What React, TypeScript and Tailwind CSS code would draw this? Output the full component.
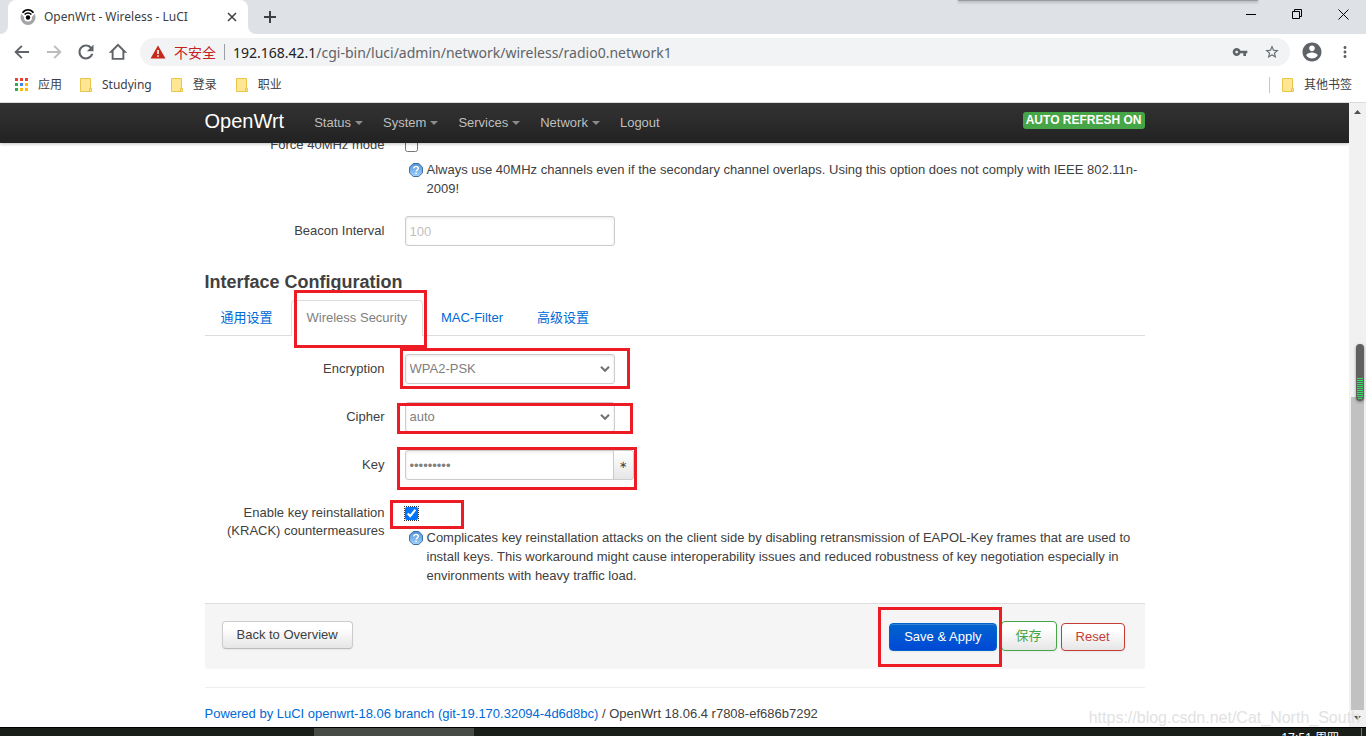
import React, { useState } from "react";

const UI_FONT = "font-['Noto_Sans','Noto_Sans_CJK_SC',sans-serif]";

function Favicon() {
  return (
    <svg width="16" height="16" viewBox="0 0 16 16" className="shrink-0">
      <circle cx="8" cy="8.500" r="7.500" fill="#a2a4a8" />
      <path d="M1.500 5L4 1.200H12L14.500 5L12.500 7.500H3.500Z" fill="#fff" />
      <circle cx="8" cy="8.500" r="4" fill="#fff" />
      <path d="M2.600 3.800C5.500 -.2 10.500 -.2 13.400 3.800" fill="none" stroke="#000" strokeWidth="1.600" />
      <path d="M4.600 5.400C6.500 3.400 9.500 3.400 11.400 5.400" fill="none" stroke="#000" strokeWidth="1.500" />
      <circle cx="8" cy="8.500" r="2.200" fill="#000" />
    </svg>
  );
}

function Material({ d, size = 20, color = "#5f6368" }: { d: string; size?: number; color?: string }) {
  return (
    <svg width={size} height={size} viewBox="0 0 24 24" fill={color} className="shrink-0">
      <path d={d} />
    </svg>
  );
}

const PATHS = {
  back: "M20.500 10.800H7.200l5.400-5.400L11 3.800 2.800 12l8.200 8.200 1.600-1.600-5.400-5.400H20.500z",
  forward: "M3.500 10.800H16.800l-5.400-5.400L13 3.800 21.200 12 13 20.200l-1.600-1.600 5.400-5.400H3.500z",
  reload:
    "M18.400 5.600C16.800 4 14.500 3 12 3c-5 0-9 4-9 9s4 9 9 9c4.200 0 7.700-2.900 8.700-6.800h-2.600c-.9 2.500-3.300 4.300-6.100 4.300-3.600 0-6.500-2.900-6.500-6.500S8.400 5.500 12 5.500c1.800 0 3.400.7 4.600 1.900L13 11h8V3z",
  home: "M12 1.800L.9 12.800h3.500v8.600h15.200v-8.600h3.500L12 1.800zm5.300 17.300H6.700v-8.600L12 5.200l5.300 5.300V19.100z",
  key: "M12.650 10C11.830 7.670 9.610 6 7 6c-3.310 0-6 2.690-6 6s2.690 6 6 6c2.610 0 4.830-1.670 5.650-4H17v4h4v-4h2v-4H12.650zM7 14c-1.100 0-2-.9-2-2s.9-2 2-2 2 .9 2 2-.9 2-2 2z",
  star: "M22 9.240l-7.190-.62L12 2 9.190 8.630 2 9.240l5.460 4.730L5.820 21 12 17.270 18.180 21l-1.630-7.030L22 9.240zM12 15.400l-3.760 2.270 1-4.280-3.320-2.880 4.380-.38L12 6.100l1.710 4.040 4.380.38-3.320 2.880 1 4.280L12 15.400z",
  user: "M12 2.500C6.750 2.500 2.500 6.750 2.500 12s4.250 9.500 9.500 9.500 9.500-4.250 9.500-9.500S17.250 2.500 12 2.500zm0 3c1.600 0 2.850 1.250 2.850 2.850S13.600 11.200 12 11.200s-2.850-1.250-2.850-2.850S10.400 5.500 12 5.500zm0 13.100c-2.380 0-4.470-1.220-5.700-3.060.03-1.890 3.800-2.930 5.700-2.930 1.890 0 5.670 1.040 5.700 2.930-1.230 1.840-3.320 3.060-5.700 3.060z",
  dots: "M12 8c1.100 0 2-.9 2-2s-.9-2-2-2-2 .9-2 2 .9 2 2 2zm0 2c-1.100 0-2 .9-2 2s.9 2 2 2 2-.9 2-2-.9-2-2-2zm0 6c-1.100 0-2 .9-2 2s.9 2 2 2 2-.9 2-2-.9-2-2-2z",
};

function TabStrip() {
  return (
    <div className="relative flex h-[34px] shrink-0 items-stretch bg-[#dee1e6]">
      <span className="h-2 w-2 self-end bg-white">
        <span className="block h-2 w-2 rounded-br-lg bg-[#dee1e6]" />
      </span>
      <div className="flex w-60 items-center rounded-t-lg bg-white pl-3 pr-2 text-[12px] text-[#3c4043]">
        <Favicon />
        <span className="ml-2 flex-1 whitespace-nowrap">OpenWrt - Wireless - LuCI</span>
        <button aria-label="Close tab" className="flex h-4 w-4 items-center justify-center">
          <svg width="10" height="10" viewBox="0 0 10 10" stroke="#3c4043" strokeWidth="1.500">
            <path d="M1 1L9 9M9 1L1 9" />
          </svg>
        </button>
      </div>
      <span className="h-2 w-2 self-end bg-white">
        <span className="block h-2 w-2 rounded-bl-lg bg-[#dee1e6]" />
      </span>
      <button aria-label="New tab" className="flex w-7 items-center justify-center">
        <svg width="12" height="12" viewBox="0 0 12 12" stroke="#3c4043" strokeWidth="2">
          <path d="M6 0V12M0 6H12" />
        </svg>
      </button>
      <div className="ml-auto flex h-7">
        <button aria-label="Minimize" className="flex w-[46px] items-center justify-center">
          <svg width="10" height="10" viewBox="0 0 10 10" stroke="#000">
            <path d="M0 5.500H10" />
          </svg>
        </button>
        <button aria-label="Restore" className="flex w-[46px] items-center justify-center">
          <svg width="10" height="10" viewBox="0 0 10 10" stroke="#000" fill="none">
            <path d="M.5 2.500H7.500V9.500H.5ZM2.500 2.500V.5H9.500V7.500H7.500" />
          </svg>
        </button>
        <button aria-label="Close" className="flex w-[46px] items-center justify-center">
          <svg width="11" height="11" viewBox="0 0 11 11" stroke="#000">
            <path d="M.5 .5L10.500 10.500M10.500 .5L.5 10.500" />
          </svg>
        </button>
      </div>
      <span className="absolute right-[108px] top-0 h-px w-[300px] bg-[#9a9ca0] shadow-[0_1px_3px_#77797c]" />
    </div>
  );
}

function Toolbar() {
  return (
    <div className="flex h-9 shrink-0 items-center pl-3 pr-3">
      <div className="flex gap-3">
        <button aria-label="Back"><Material d={PATHS.back} /></button>
        <button aria-label="Forward"><Material d={PATHS.forward} color="#babcbe" /></button>
        <button aria-label="Reload"><Material d={PATHS.reload} /></button>
        <button aria-label="Home"><Material d={PATHS.home} /></button>
      </div>
      <div className="ml-3 flex h-7 flex-1 items-center rounded-full bg-[#f1f3f4] pl-2.5 pr-2.5 text-[14px]">
        <svg width="16" height="16" viewBox="0 0 16 16" className="shrink-0">
          <path d="M8 1.500L15.500 14.500H.5Z" fill="#c5291c" />
          <path d="M7.200 6H8.800V10H7.200ZM7.200 11.200H8.800V12.800H7.200Z" fill="#fff" />
        </svg>
        <span className="ml-2 whitespace-nowrap text-[#c5221f]">不安全</span>
        <span className="ml-2 h-4 w-px bg-[#9aa0a6]" />
        <div role="textbox" aria-label="Address" className="ml-2 flex-1 whitespace-nowrap text-[#202124]">
          192.168.42.1<span className="text-[#5f6368]">/cgi-bin/luci/admin/network/wireless/radio0.network1</span>
        </div>
        <button aria-label="Passwords"><Material d={PATHS.key} size={16} /></button>
        <button aria-label="Bookmark" className="ml-4"><Material d={PATHS.star} size={16} /></button>
      </div>
      <button aria-label="Profile" className="ml-2.5"><Material d={PATHS.user} size={24} /></button>
      <button aria-label="Menu" className="ml-3"><Material d={PATHS.dots} size={18} /></button>
    </div>
  );
}

function Folder({ label }: { label: string }) {
  return (
    <a href="#" className="flex items-center gap-2.5 whitespace-nowrap">
      <svg width="12" height="14" viewBox="0 0 12 14" className="shrink-0">
        <path d="M.5 .5H10.500V10L11.500 10.500V13.500H.5Z" fill="#ffe693" stroke="#e8c64c" />
        <path d="M9.500 13V10.500H11" fill="none" stroke="#e8c64c" />
      </svg>
      {label}
    </a>
  );
}

function Bookmarks() {
  const colors = ["#ea4335", "#ea4335", "#ea4335", "#34a853", "#4285f4", "#fbbc04", "#34a853", "#fbbc04", "#fbbc04"];
  return (
    <div className="flex h-[33px] shrink-0 items-center border-b border-[#dadce0] pb-[3px] pl-[15px] pr-3.5 text-[12px] text-[#3c4043]">
      <a href="#" className="flex items-center gap-2.5">
        <svg width="13" height="13" viewBox="0 0 13 13">
          {colors.map((c, i) => (
            <rect key={i} x={(i % 3) * 5} y={Math.floor(i / 3) * 5} width="3" height="3" fill={c} />
          ))}
        </svg>
        应用
      </a>
      <div className="ml-[18px] flex gap-[19px]">
        <Folder label="Studying" />
        <Folder label="登录" />
        <Folder label="职业" />
      </div>
      <span className="ml-auto mr-3 h-4 w-px bg-[#c4c7cb]" />
      <Folder label="其他书签" />
    </div>
  );
}

function NavBar() {
  return (
    <header className="relative z-10 h-10 bg-linear-to-b from-[#333] to-[#222] shadow-[0_1px_3px_rgba(0,0,0,0.25)]">
      <div className="mx-auto flex h-10 w-full max-w-[940px] items-start">
        <a href="#" className="pt-2 text-[20px] leading-5 text-white">OpenWrt</a>
        <nav className="ml-5 flex">
          {["Status", "System", "Services", "Network"].map((name) => (
            <a key={name} href="#" className="flex items-center px-2.5 pt-2.5 leading-[19px] text-[#bfbfbf]">
              {name}
              <span className="ml-1 border-x-4 border-t-4 border-x-transparent border-t-[#8c8c8c]" />
            </a>
          ))}
          <a href="#" className="px-2.5 pt-2.5 leading-[19px] text-[#bfbfbf]">Logout</a>
        </nav>
        <span className="ml-auto mt-[9px] h-[17px] rounded-[3px] bg-[#46a546] px-[3px] text-[12px] leading-4 font-bold text-white">
          AUTO REFRESH ON
        </span>
      </div>
    </header>
  );
}

function Row({ label, id, children }: { label: React.ReactNode; id: string; children: React.ReactNode }) {
  return (
    <div className="mb-[18px] flex">
      <label htmlFor={id} className="w-[180px] shrink-0 pt-1.5 text-right">{label}</label>
      <div className="relative ml-5 min-w-0 flex-1">{children}</div>
    </div>
  );
}

function Help({ children }: { children: React.ReactNode }) {
  return (
    <div className="mt-2 flex leading-[19px]">
      <svg width="14" height="14" viewBox="0 0 14 14" className="ml-1 mr-1 mt-[3px] shrink-0">
        <defs>
          <linearGradient id="help" x1="0" y1="0" x2="0" y2="1">
            <stop offset="0" stopColor="#4f92d8" />
            <stop offset="1" stopColor="#a0d2fa" />
          </linearGradient>
        </defs>
        <path d="M4.200 .5H9.800L13.500 4.200V9.800L9.800 13.500H4.200L.5 9.800V4.200Z" fill="url(#help)" stroke="#3f6f9f" />
        <path d="M4.800 5.400C4.800 2.900 9.300 2.900 9.300 5.300C9.300 6.800 7.100 6.900 7.100 8.600M7.100 9.700V11.100" fill="none" stroke="#fff" strokeWidth="1.500" />
      </svg>
      <p className="min-w-0 flex-1">{children}</p>
    </div>
  );
}

const FIELD =
  "block h-[30px] w-[210px] border border-[#ccc] bg-white px-1 text-[13px] text-[#808080] shadow-[inset_0_1px_3px_rgba(0,0,0,0.1)] outline-none placeholder:text-[#bfbfbf]";

function Select({ id, options }: { id: string; options: string[] }) {
  return (
    <div className="relative w-[210px]">
      <select id={id} className={`${FIELD} appearance-none rounded-[3px]`}>
        {options.map((o) => <option key={o}>{o}</option>)}
      </select>
      <svg width="10" height="6" viewBox="0 0 10 6" className="pointer-events-none absolute right-[5px] top-3">
        <path d="M1 .8L5 4.800L9 .8" fill="none" stroke="#707070" strokeWidth="2" />
      </svg>
    </div>
  );
}

function Mark({ className }: { className: string }) {
  return <span aria-hidden="true" className={`pointer-events-none absolute z-10 border-3 border-[#ed1c24] ${className}`} />;
}

function Check({ id, initial }: { id: string; initial: boolean }) {
  const [on, setOn] = useState(initial);
  return (
    <div className="flex h-[22px] items-end">
      <input
        id={id}
        type="checkbox"
        checked={on}
        onChange={() => setOn(!on)}
        className={on ? "h-[13px] w-[13px] outline outline-dotted outline-[#333]" : "h-[13px] w-[13px]"}
      />
    </div>
  );
}

const BTN = "rounded border px-3.5 text-[13px] leading-[18px] shadow-[inset_0_1px_0_rgba(255,255,255,0.2),0_1px_2px_rgba(0,0,0,0.05)]";
const LIGHT = "bg-linear-to-b from-white from-25% to-[#e6e6e6]";

function Content() {
  const tabs = ["通用设置", "Wireless Security", "MAC-Filter", "高级设置"];
  return (
    <main className="mx-auto -mt-[13px] w-full max-w-[940px]">
      <Row id="force" label="Force 40MHz mode">
        <Check id="force" initial={false} />
        <Help>
          Always use 40MHz channels even if the secondary channel overlaps. Using this option does not comply with IEEE
          802.11n-2009!
        </Help>
      </Row>
      <Row id="beacon" label="Beacon Interval">
        <input id="beacon" placeholder="100" className={`${FIELD} rounded-[3px]`} />
      </Row>

      <h3 className="text-[18px] leading-9 font-bold">Interface Configuration</h3>
      <div className="mb-[18px] flex h-9 border-b border-[#ddd]">
        {tabs.map((t, i) => (
          <div key={t} className="relative mr-0.5 h-9">
            <a
              href="#"
              className={
                i === 1
                  ? "block h-9 whitespace-nowrap rounded-t border border-b-0 border-[#ddd] bg-white px-[15px] leading-[34px] text-[#808080]"
                  : "block whitespace-nowrap border border-transparent px-[15px] leading-[34px] text-[#0069d6]"
              }
            >
              {t}
            </a>
            {i === 1 && <Mark className="-right-1 -bottom-3 h-[58px] w-[133px]" />}
          </div>
        ))}
      </div>

      <Row id="enc" label="Encryption">
        <Select id="enc" options={["WPA2-PSK", "WPA-PSK", "No Encryption"]} />
        <Mark className="-left-[5px] -top-1.5 h-[41px] w-[230px]" />
      </Row>
      <Row id="cipher" label="Cipher">
        <Select id="cipher" options={["auto", "Force CCMP (AES)", "Force TKIP"]} />
        <Mark className="-left-2 top-px h-[31px] w-[236px]" />
      </Row>
      <Row id="key" label="Key">
        <div className="flex">
          <input id="key" type="password" defaultValue="openwrt18" className={`${FIELD} rounded-l-[3px]`} />
          <button
            aria-label="Reveal key"
            className="-ml-0.5 h-[30px] w-[21px] rounded-r-[3px] border border-[#ccc] bg-linear-to-b from-white to-[#e6e6e6] text-center text-[10px]"
          >
            ∗
          </button>
        </div>
        <Mark className="-left-2 -top-[3px] h-[43px] w-60" />
      </Row>
      <Row id="krack" label={<>Enable key reinstallation (KRACK) countermeasures</>}>
        <Check id="krack" initial={true} />
        <Help>
          Complicates key reinstallation attacks on the client side by disabling retransmission of EAPOL-Key frames that
          are used to install keys. This workaround might cause interoperability issues and reduced robustness of key
          negotiation especially in environments with heavy traffic load.
        </Help>
        <Mark className="-left-[15px] top-0.5 h-[29px] w-[74px]" />
      </Row>

      <div className="flex items-start border-t border-[#ddd] bg-[#f5f5f5] px-[17px] pt-[17px] pb-[18px] rounded-b-[3px]">
        <button className={`${BTN} ${LIGHT} h-7 border-[#ccc] border-b-[#bbb]`}>Back to Overview</button>
        <div className="ml-auto mr-[3px] flex items-end gap-1">
          <div className="relative">
            <button className={`${BTN} h-7 border-[#0064cd] bg-linear-to-b from-[#0064cd] to-[#0048d6] text-white`}>
              Save &amp; Apply
            </button>
            <Mark className="-right-[5px] -bottom-4 h-[60px] w-[124px]" />
          </div>
          <button className={`${BTN} ${LIGHT} h-[30px] border-[#46a546] text-[#46a546]`}>保存</button>
          <button className={`${BTN} ${LIGHT} h-7 border-[#c43c35] text-[#c43c35]`}>Reset</button>
        </div>
      </div>

      <footer className="mt-[18px] border-t border-[#eee] pt-[17px]">
        <a href="#" className="text-[#0069d6]">Powered by LuCI openwrt-18.06 branch (git-19.170.32094-4d6d8bc)</a> / OpenWrt 18.06.4
        r7808-ef686b7292
      </footer>
    </main>
  );
}

function Scrollbar() {
  return (
    <div className="relative flex w-[17px] shrink-0 flex-col items-center bg-[#f1f1f1]">
      <svg width="17" height="17" viewBox="0 0 17 17"><path d="M5 11H12L8.500 7Z" fill="#505050" /></svg>
      <div className="flex min-h-0 w-full flex-1 flex-col px-0.5">
        <div className="grow-[277]" />
        <div className="grow-[312] bg-[#c1c1c1]" />
      </div>
      <svg width="17" height="17" viewBox="0 0 17 17"><path d="M5 6H12L8.500 10Z" fill="#505050" /></svg>
      <div className="absolute right-0.5 top-[241px] flex h-[57px] w-2 flex-col justify-end rounded-full bg-[#606060] p-px shadow-[0_1px_3px_rgba(0,0,0,0.4)]">
        <svg width="6" height="22" viewBox="0 0 6 22">
          {Array.from({ length: 11 }, (_, i) => (
            <rect key={i} x={i === 10 ? 1 : 0} y={i * 2} width={i === 10 ? 4 : 6} height="1" fill="#2fe05f" />
          ))}
        </svg>
      </div>
    </div>
  );
}

export default function App() {
  return (
    <div className={`flex h-screen flex-col overflow-hidden bg-white ${UI_FONT}`}>
      <TabStrip />
      <Toolbar />
      <Bookmarks />
      <div className="relative flex min-h-0 flex-1 font-['Liberation_Sans','Noto_Sans_CJK_SC',sans-serif] text-[13px] leading-[18px] text-[#404040]">
        <div className="min-w-0 flex-1 overflow-hidden">
          <NavBar />
          <Content />
        </div>
        <Scrollbar />
        <span className="absolute right-1.5 bottom-0 text-[16px] leading-[18px] text-[#e2e2e2]">
          https://blog.csdn.net/Cat_North_South
        </span>
      </div>
      <div className="flex h-[9px] shrink-0 overflow-hidden border-t border-black bg-[#191e18] text-[12px] leading-4 text-white">
        <span className="ml-[314px] w-40 bg-[#474b46]" />
        <span className="ml-auto mr-[22px] mt-0.5 whitespace-nowrap">17:51 周四</span>
        <span className="mr-1 w-px bg-[#777]" />
      </div>
    </div>
  );
}
